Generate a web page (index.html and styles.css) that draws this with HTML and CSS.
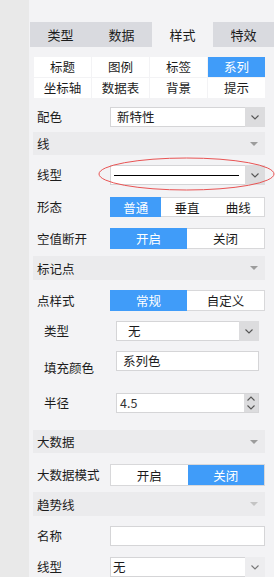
FILE: index.html
```html
<!DOCTYPE html>
<html>
<head>
    <title>系列样式</title>
    <link rel="stylesheet" href="styles.css">
</head>
<body>
<div class="page">
    <div class="rail"></div>
    <div class="panel">
        <div class="tabs">
            <div class="tab">类型</div>
            <div class="tab">数据</div>
            <div class="tab active">样式</div>
            <div class="tab">特效</div>
        </div>
        <div class="subtabs">
            <div class="subtab">标题</div>
            <div class="subtab">图例</div>
            <div class="subtab">标签</div>
            <div class="subtab active">系列</div>
            <div class="subtab">坐标轴</div>
            <div class="subtab">数据表</div>
            <div class="subtab">背景</div>
            <div class="subtab">提示</div>
        </div>

        <div class="row mt9">
            <span class="label">配色</span>
            <div class="select"><span class="value">新特性</span><span class="drop"><svg width="8" height="5" viewBox="0 0 8 5"><path d="M0.5 0.5 L4 4 L7.5 0.5" fill="none" stroke="#555" stroke-width="1.1"/></svg></span></div>
        </div>

        <div class="section mt5">线<i class="tri"></i></div>

        <div class="row mt10 marked">
            <span class="label">线型</span>
            <div class="select"><span class="line-sample"></span><span class="drop"><svg width="8" height="5" viewBox="0 0 8 5"><path d="M0.5 0.5 L4 4 L7.5 0.5" fill="none" stroke="#555" stroke-width="1.1"/></svg></span></div>
            <svg class="circle-mark" width="177" height="34" viewBox="0 0 177 34"><ellipse cx="88.5" cy="17" rx="87.5" ry="16" fill="none" stroke="#e95454" stroke-width="1"/></svg>
        </div>

        <div class="row mt12">
            <span class="label">形态</span>
            <div class="seg h20">
                <span class="seg-item on">普通</span>
                <span class="seg-item">垂直</span>
                <span class="seg-item">曲线</span>
            </div>
        </div>

        <div class="row mt11">
            <span class="label">空值断开</span>
            <div class="seg h21">
                <span class="seg-item on">开启</span>
                <span class="seg-item">关闭</span>
            </div>
        </div>

        <div class="section tall mt7">标记点<i class="tri"></i></div>

        <div class="row mt10">
            <span class="label">点样式</span>
            <div class="seg h21">
                <span class="seg-item on">常规</span>
                <span class="seg-item">自定义</span>
            </div>
        </div>

        <div class="row sub mt10">
            <span class="label">类型</span>
            <div class="select"><span class="value wide">无</span><span class="drop"><svg width="8" height="5" viewBox="0 0 8 5"><path d="M0.5 0.5 L4 4 L7.5 0.5" fill="none" stroke="#555" stroke-width="1.1"/></svg></span></div>
        </div>

        <div class="row sub mt10">
            <span class="label low">填充颜色</span>
            <div class="input"><span class="value">系列色</span></div>
        </div>

        <div class="row sub mt22">
            <span class="label">半径</span>
            <div class="select"><span class="value num">4.5</span><span class="spin">
                <svg width="8" height="5" viewBox="0 0 8 5"><path d="M0.5 4.5 L4 1 L7.5 4.5" fill="none" stroke="#555" stroke-width="1.1"/></svg>
                <svg width="8" height="5" viewBox="0 0 8 5"><path d="M0.5 0.5 L4 4 L7.5 0.5" fill="none" stroke="#555" stroke-width="1.1"/></svg>
            </span></div>
        </div>

        <div class="section mt17">大数据<i class="tri"></i></div>

        <div class="row mt11">
            <span class="label">大数据模式</span>
            <div class="seg h22">
                <span class="seg-item">开启</span>
                <span class="seg-item on">关闭</span>
            </div>
        </div>

        <div class="section tall mt6">趋势线<i class="tri faint"></i></div>

        <div class="row mt10">
            <span class="label">名称</span>
            <div class="input"></div>
        </div>

        <div class="row mt11">
            <span class="label">线型</span>
            <div class="select"><span class="value tight">无</span><span class="drop light"><svg width="8" height="5" viewBox="0 0 8 5"><path d="M0.5 0.5 L4 4 L7.5 0.5" fill="none" stroke="#777" stroke-width="1.1"/></svg></span></div>
        </div>
    </div>
</div>
</body>
</html>
```

FILE: styles.css
```css
body {
    margin: 0;
    font-family: "Noto Sans CJK SC", "Liberation Sans", sans-serif;
    font-size: 12.5px;
    color: #1c1c1c;
    background: #fff;
}
.page {
    display: flex;
    height: 577px;
    overflow: hidden;
}
.rail {
    width: 29px;
    flex: none;
    background: #e9e9e9;
}
.panel {
    width: 245px;
    flex: none;
    background: #f3f3f5;
    padding-top: 22px;
}
.tabs {
    display: grid;
    grid-template-columns: repeat(4, 61px);
    margin-left: 1px;
}
.tab {
    height: 25px;
    line-height: 25px;
    text-align: center;
    background: #d9dadf;
    font-size: 13px;
}
.tab.active {
    background: #f3f3f5;
}
.subtabs {
    display: grid;
    grid-template-columns: repeat(4, 57px);
    gap: 1px;
    margin: 10px 9px 0 5px;
}
.subtab {
    height: 20px;
    line-height: 20px;
    text-align: center;
    background: #fff;
}
.subtab.active {
    background: #409cf9;
    color: #fff;
}

/* form rows */
.row {
    display: flex;
    align-items: center;
    margin: 0 9px 0 4px;
    padding-left: 4px;
}
.row.sub {
    padding-left: 11px;
    padding-right: 6px;
}
.label {
    width: 73px;
    flex: none;
    line-height: 16px;
}
.row.sub .label {
    width: 72px;
}
.label.low {
    align-self: flex-end;
    margin-bottom: -5px;
}
.select, .input {
    flex: 1;
    height: 20px;
    box-sizing: border-box;
    border: 1px solid #d5d5d7;
    background: #fff;
    display: flex;
    align-items: center;
}
.value {
    flex: 1;
    padding-left: 6px;
    line-height: 18px;
}
.value.wide {
    padding-left: 11px;
}
.value.tight {
    padding-left: 2px;
}
.value.num {
    padding-left: 3px;
    color: #333;
}
.drop {
    width: 20px;
    height: 20px;
    margin: -1px -1px -1px 0;
    background: #dcdcde;
    display: flex;
    align-items: center;
    justify-content: center;
}
.drop.light {
    background: #ededef;
}
.spin {
    width: 14px;
    height: 18px;
    background: #dcdcde;
    display: flex;
    flex-direction: column;
    align-items: center;
    justify-content: center;
    gap: 4px;
}
.line-sample {
    flex: 1;
    height: 1px;
    background: #000;
    margin: 0 6px 0 3px;
}
.marked {
    position: relative;
}
.circle-mark {
    position: absolute;
    left: 65px;
    top: -8px;
}

/* segmented buttons */
.seg {
    flex: 1;
    display: flex;
    box-sizing: border-box;
    border: 1px solid #d8d8da;
    background: #fff;
}
.seg.h20 { height: 20px; }
.seg.h21 { height: 21px; }
.seg.h22 { height: 22px; }
.seg-item {
    flex: 1;
    display: flex;
    align-items: center;
    justify-content: center;
}
.seg-item.on {
    background: #409cf9;
    color: #fff;
}
.seg-item.on:first-child {
    margin: -1px 0 -1px -1px;
}

/* section headers */
.section {
    height: 23px;
    line-height: 23px;
    margin: 0 9px 0 4px;
    padding: 0 7px 0 4px;
    background: #ebebed;
    display: flex;
    justify-content: space-between;
    align-items: center;
}
.section.tall {
    height: 24px;
}
.tri {
    width: 0;
    height: 0;
    border-left: 4px solid transparent;
    border-right: 4px solid transparent;
    border-top: 4px solid #9c9c9c;
}
.tri.faint {
    border-top-color: #c4c4c4;
}

.mt5 { margin-top: 5px; }
.mt6 { margin-top: 6px; }
.mt7 { margin-top: 7px; }
.mt9 { margin-top: 9px; }
.mt10 { margin-top: 10px; }
.mt11 { margin-top: 11px; }
.mt12 { margin-top: 12px; }
.mt17 { margin-top: 17px; }
.mt22 { margin-top: 22px; }
```
